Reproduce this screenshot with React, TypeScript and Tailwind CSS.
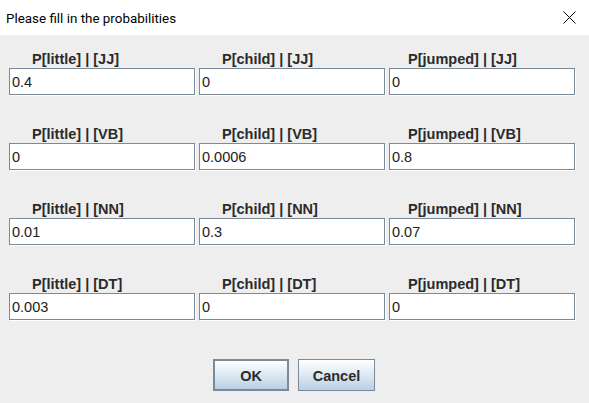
import React from "react";

const cols = ["little", "child", "jumped"];
const rows: { tag: string; vals: string[] }[] = [
  { tag: "JJ", vals: ["0.4", "0", "0"] },
  { tag: "VB", vals: ["0", "0.0006", "0.8"] },
  { tag: "NN", vals: ["0.01", "0.3", "0.07"] },
  { tag: "DT", vals: ["0.003", "0", "0"] },
];

const labelPad = ["pl-[23px]", "pl-[23px]", "pl-[19px]"];

export default function App() {
  return (
    <div
      className="w-[589px] h-[403px] bg-[#eeeeee] flex flex-col overflow-hidden"
      style={{ fontFamily: '"Liberation Sans", Arial, sans-serif' }}
    >
      <div className="h-[35px] bg-white flex items-center justify-between pl-[6px] pr-[12px] shrink-0">
        <span
          className="text-[13.4px] text-black pt-[3px]"
          style={{ fontFamily: 'Roboto, "Noto Sans", sans-serif' }}
        >
          Please fill in the probabilities
        </span>
        <svg width="13" height="13" viewBox="0 0 13 13" className="mr-[1px]">
          <path d="M0.5 0.5 L12.5 12.5 M12.5 0.5 L0.5 12.5" stroke="#000" strokeWidth="1" fill="none" />
        </svg>
      </div>
      <div className="flex flex-col gap-[31px] pt-[16px] pl-[9px]">
        {rows.map((r) => (
          <div key={r.tag} className="flex gap-[4px]">
            {cols.map((c, i) => (
              <div key={c} className="flex flex-col w-[186px]">
                <div
                  className={`h-[17px] leading-[17px] text-[14.5px] font-bold text-[#2b2b2b] whitespace-nowrap ${labelPad[i]}`}
                >
                  P[{c}] | [{r.tag}]
                </div>
                <div className="h-[27px] bg-white border border-[#7a8a99] shadow-[1px_1px_0_#ffffff] pl-[2px] pt-[3px] text-[14.5px] leading-[21px] text-[#222222] whitespace-nowrap">
                  {r.vals[i]}
                </div>
              </div>
            ))}
          </div>
        ))}
      </div>
      <div className="flex justify-center gap-[9px] mt-[39px] pr-[1px]">
        <button className="w-[76px] h-[32px] pt-[3px] border-2 border-[#7a8a99] bg-gradient-to-b from-white via-[#dde8f3] to-[#b8cfe5] text-[14.5px] font-bold text-[#2b2b2b]">
          OK
        </button>
        <button className="w-[77px] h-[32px] pt-[3px] border border-[#7a8a99] bg-gradient-to-b from-white via-[#dde8f3] to-[#b8cfe5] text-[14.5px] font-bold text-[#2b2b2b]">
          Cancel
        </button>
      </div>
    </div>
  );
}
